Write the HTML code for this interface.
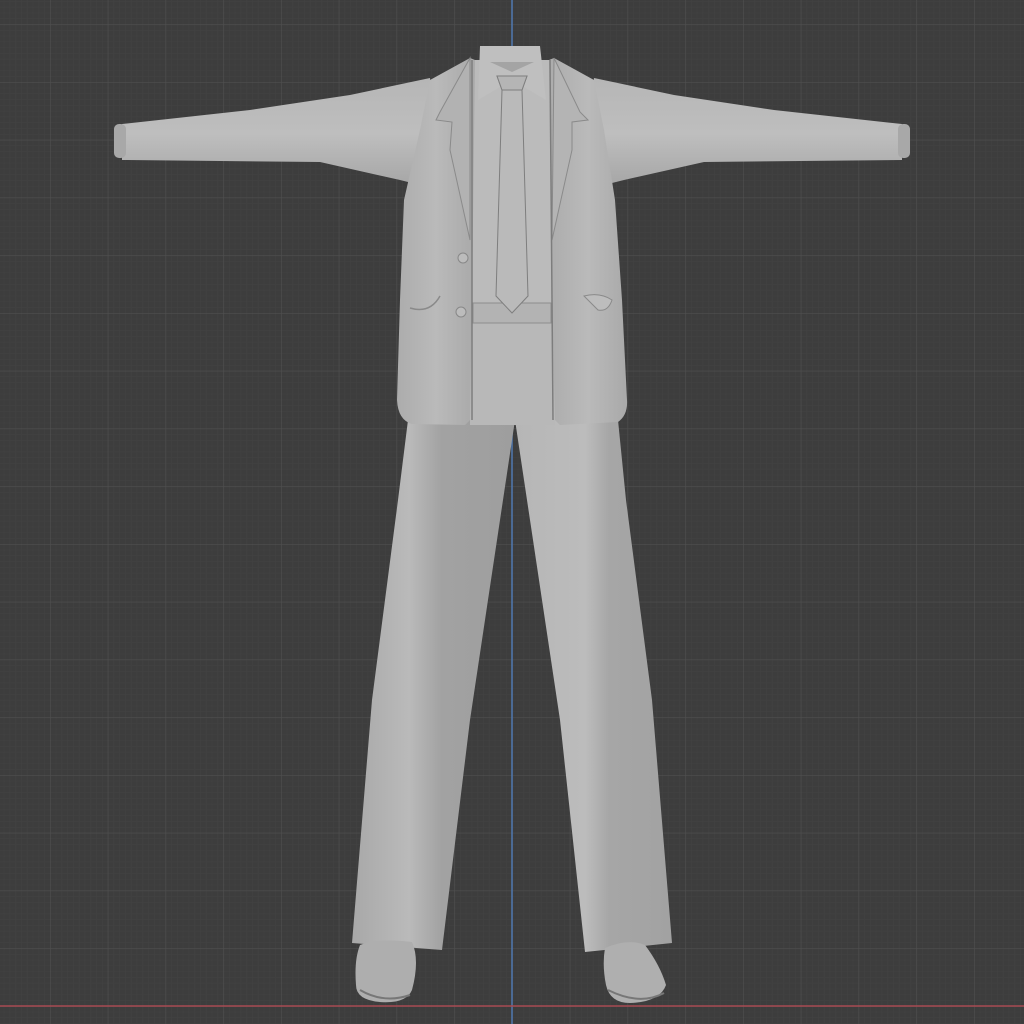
<!DOCTYPE html>
<html><head><style>html,body{margin:0;padding:0;background:#3d3d3d;}svg{display:block}</style></head>
<body>
<svg width="1024" height="1024" viewBox="0 0 1024 1024" xmlns="http://www.w3.org/2000/svg">
<defs>
<pattern id="minor" x="512" y="1006" width="5.775" height="5.775" patternUnits="userSpaceOnUse">
<path d="M0 0H5.775M0 0V5.775" stroke="#424242" stroke-width="1" fill="none"/>
</pattern>
<pattern id="major" x="512" y="1006" width="57.75" height="57.75" patternUnits="userSpaceOnUse">
<path d="M0 0H57.75M0 0V57.75" stroke="#4f4f4f" stroke-width="1.2" fill="none"/>
</pattern>
<linearGradient id="sleeveL" x1="0" y1="0" x2="0" y2="1">
<stop offset="0" stop-color="#b6b6b6"/><stop offset="0.5" stop-color="#bebebe"/><stop offset="1" stop-color="#a4a4a4"/>
</linearGradient>
<linearGradient id="legL" x1="0" y1="0" x2="1" y2="0">
<stop offset="0" stop-color="#a8a8a8"/><stop offset="0.35" stop-color="#bababa"/><stop offset="0.55" stop-color="#a2a2a2"/><stop offset="1" stop-color="#9e9e9e"/>
</linearGradient>
<linearGradient id="legR" x1="0" y1="0" x2="1" y2="0">
<stop offset="0" stop-color="#b6b6b6"/><stop offset="0.45" stop-color="#bcbcbc"/><stop offset="0.6" stop-color="#a6a6a6"/><stop offset="1" stop-color="#a2a2a2"/>
</linearGradient>
<linearGradient id="jacket" x1="0" y1="0" x2="1" y2="0">
<stop offset="0" stop-color="#acacac"/><stop offset="0.5" stop-color="#bababa"/><stop offset="1" stop-color="#a9a9a9"/>
</linearGradient>
</defs>
<rect width="1024" height="1024" fill="#3d3d3d"/>
<rect width="1024" height="1024" fill="url(#minor)"/>
<rect width="1024" height="1024" fill="url(#major)"/>
<line x1="512" y1="0" x2="512" y2="1024" stroke="#4f78b0" stroke-width="1.5"/>
<line x1="0" y1="1006" x2="1024" y2="1006" stroke="#a84a52" stroke-width="1.5"/>

<path d="M408 420 L515 420 L500 520 L470 720 L442 950 L352 943 L372 700 L398 500 Z" fill="url(#legL)"/>
<path d="M515 420 L618 420 L626 500 L652 700 L672 943 L585 952 L560 720 L530 520 Z" fill="url(#legR)"/>
<path d="M470 320 L555 320 L555 425 L470 425 Z" fill="#b8b8b8"/>
<path d="M360 945 Q378 938 412 942 Q420 960 412 990 Q406 1004 380 1002 Q356 1000 356 985 Q354 960 360 945Z" fill="#aeaeae"/>
<path d="M360 990 Q384 1004 410 995" stroke="#777" stroke-width="2" fill="none"/>
<path d="M605 948 Q628 938 645 945 Q660 965 666 985 Q660 1002 630 1003 Q610 1003 606 985 Q602 965 605 948Z" fill="#afafaf"/>
<path d="M608 990 Q640 1006 664 993" stroke="#777" stroke-width="2" fill="none"/>

<path d="M122 124 L250 110 L350 95 L430 78 L440 190 L400 180 L320 162 L122 160 Z" fill="url(#sleeveL)"/>
<rect x="114" y="124" width="12" height="34" rx="5" fill="#a8a8a8"/>
<path d="M902 124 L774 110 L674 95 L594 78 L584 190 L624 180 L704 162 L902 160 Z" fill="url(#sleeveL)"/>
<rect x="898" y="124" width="12" height="34" rx="5" fill="#a8a8a8"/>

<path d="M470 60 L555 60 L555 320 L470 320 Z" fill="#bbbbbb"/>
<path d="M480 46 L540 46 L546 100 L512 80 L478 100 Z" fill="#bfbfbf"/>
<path d="M490 62 L534 62 L512 72 Z" fill="#a4a4a4"/>
<rect x="473" y="303" width="78" height="20" fill="#b3b3b3" stroke="#8e8e8e" stroke-width="1"/>
<path d="M497 76 L527 76 L522 90 L528 296 L512 313 L496 296 L502 90 Z" fill="#bababa" stroke="#7e7e7e" stroke-width="1"/>
<path d="M497 76 L527 76 L522 90 L502 90 Z" fill="#b5b5b5" stroke="#7e7e7e" stroke-width="1"/>

<path d="M430 80 L470 58 L475 60 L472 300 L470 420 L465 425 L412 424 Q398 420 397 400 L400 300 L404 200 L420 130 Z" fill="url(#jacket)"/>
<path d="M470 58 L440 112 L436 120 L452 122 L450 150 L470 240 Z" fill="#b2b2b2" stroke="#8a8a8a" stroke-width="1"/>
<path d="M472 60 L472 420" stroke="#7d7d7d" stroke-width="1.5"/>
<path d="M594 80 L554 58 L549 60 L552 300 L555 420 L560 425 L618 422 Q628 415 627 400 L622 300 L615 200 L604 130 Z" fill="url(#jacket)"/>
<path d="M554 58 L580 112 L588 120 L572 122 L572 150 L552 240 Z" fill="#b4b4b4" stroke="#8a8a8a" stroke-width="1"/>
<path d="M550 60 L553 420" stroke="#7d7d7d" stroke-width="1.5"/>
<path d="M410 308 Q430 314 440 296" stroke="#8a8a8a" stroke-width="1.5" fill="none"/>
<path d="M584 296 Q600 292 612 300 Q608 312 598 310 Z" fill="#bdbdbd" stroke="#8a8a8a" stroke-width="1"/>
<circle cx="463" cy="258" r="5" fill="#bcbcbc" stroke="#888" stroke-width="1"/>
<circle cx="461" cy="312" r="5" fill="#bcbcbc" stroke="#888" stroke-width="1"/>
</svg>
</body></html>
